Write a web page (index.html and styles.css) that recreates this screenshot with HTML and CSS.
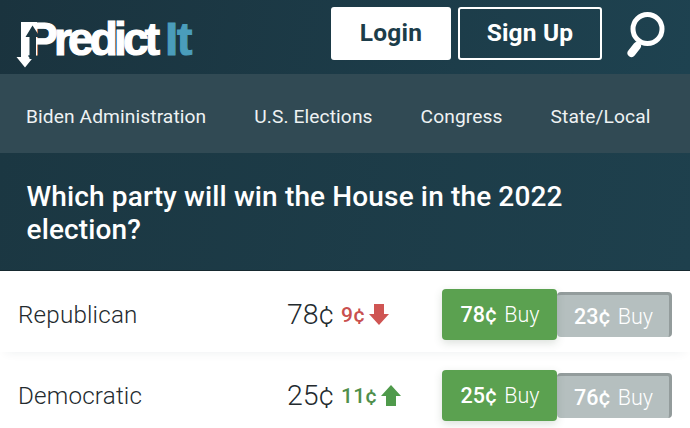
FILE: index.html
```html
<!DOCTYPE html>
<html lang="en">
<head>
<meta charset="utf-8">
<title>PredictIt</title>
<link rel="stylesheet" href="styles.css">
</head>
<body>
<header class="top">
  <a class="logo">
    <span>Predict</span><span class="logo-b">It</span>
    <svg class="logo-arrows" width="30" height="50" viewBox="0 0 30 50">
      <path d="M6 2h16v33H13.500v2h5L10 47.500 1.500 37H6z" fill="#fff"/>
      <path d="M17.500 5.500L25 17h-4v21h-6.500V17h-4z" fill="#1b3641"/>
      <path d="M14.500 37h8v2h-8z" fill="#1b3641"/>
    </svg>
  </a>
  <div class="actions">
    <button class="btn btn-login">Login</button>
    <button class="btn btn-signup">Sign Up</button>
    <svg class="search" width="42" height="48" viewBox="0 0 42 48" fill="none">
      <circle cx="21.500" cy="19" r="14.500" stroke="#fff" stroke-width="5"/>
      <path d="M15 31l-5 6" stroke="#fff" stroke-width="3"/>
      <path d="M11 36l-5.500 7" stroke="#fff" stroke-width="8" stroke-linecap="round"/>
    </svg>
  </div>
</header>
<nav class="nav">
  <a>Biden Administration</a>
  <a>U.S. Elections</a>
  <a>Congress</a>
  <a>State/Local</a>
</nav>
<section class="title">
  <h1>Which party will win the House in the 2022 election?</h1>
</section>
<main>
  <div class="row">
    <div class="name">Republican</div>
    <div class="price">78¢</div>
    <div class="change down">9¢
      <svg class="arrow" width="20" height="21" viewBox="0 0 20 21"><path d="M5 0h10v10h5L10 21 0 10h5z" fill="#cf5553"/></svg>
    </div>
    <div class="buys">
      <button class="buy yes"><b>78¢</b> Buy</button>
      <button class="buy no"><b>23¢</b> Buy</button>
    </div>
  </div>
  <div class="row">
    <div class="name">Democratic</div>
    <div class="price">25¢</div>
    <div class="change up">11¢
      <svg class="arrow" width="20" height="21" viewBox="0 0 20 21"><path d="M5 21h10V11h5L10 0 0 11h5z" fill="#4f9a4b"/></svg>
    </div>
    <div class="buys">
      <button class="buy yes"><b>25¢</b> Buy</button>
      <button class="buy no"><b>76¢</b> Buy</button>
    </div>
  </div>
</main>
</body>
</html>
```
FILE: styles.css
```css
* { box-sizing: border-box; }
html, body { margin: 0; height: 428px; overflow: hidden; }
body { background: #fff; font-family: Roboto, "Liberation Sans", sans-serif; color: #232a2e; }

.top {
  height: 74px;
  display: flex;
  align-items: flex-start;
  justify-content: space-between;
  padding: 7px 22px 0 18px;
  background: linear-gradient(100deg, #1a333e, #1e4250);
}
.logo {
  position: relative;
  display: flex;
  height: 60px;
  padding: 7px 0 0 9px;
  font-family: "Liberation Sans", sans-serif;
  font-weight: 700;
  font-size: 46px;
  line-height: 50px;
  letter-spacing: -3.800px;
  color: #fff;
  -webkit-text-stroke: 1.200px currentColor;
}
.logo-b { color: #4a9dbb; margin-left: 9px; letter-spacing: -1.200px; }
.logo-arrows { position: absolute; left: -3px; top: 13px; }

.actions { display: flex; align-items: flex-start; }
.btn {
  height: 53px;
  border-radius: 3px;
  font-family: Roboto, sans-serif;
  font-size: 24.500px;
  font-weight: 700;
  letter-spacing: .2px;
  padding: 0 0 2px;
}
.btn-login { width: 120px; background: #fff; color: #1c3d4a; border: 0; }
.btn-signup { width: 144px; margin-left: 7px; background: transparent; color: #fff; border: 2px solid #fff; }
.search { margin: 3px 0 0 24px; }

.nav {
  height: 79px;
  display: flex;
  align-items: center;
  gap: 48px;
  padding: 6px 0 0 26px;
  background: #314a54;
  color: #eef2f3;
  font-size: 19.200px;
  letter-spacing: .1px;
}

.title {
  height: 118px;
  padding: 27px 60px 0 26.500px;
  background: linear-gradient(100deg, #1b3742, #1e404d);
  border-bottom: 1px solid #16292f;
}
.title h1 {
  margin: 0;
  color: #fff;
  font-size: 28px;
  line-height: 33px;
  font-weight: 500;
  letter-spacing: .14px;
}

.row {
  height: 81px;
  display: flex;
  align-items: center;
  padding: 6px 18px 0;
  box-shadow: 0 6px 10px -6px rgba(30, 50, 60, .08);
}
.name { width: 269px; font-size: 24.200px; font-weight: 300; letter-spacing: .2px; }
.price { width: 54px; font-size: 28.500px; font-weight: 300; }
.change { display: flex; align-items: center; gap: 4px; width: 102px; font-size: 21px; font-weight: 500; letter-spacing: .2px; }
.down { color: #c9504f; }
.up { color: #4f8f4c; }
.arrow { flex: none; }

.buys { display: flex; align-items: flex-start; margin-left: -1px; }
.buy {
  height: 45px;
  border: 0;
  border-radius: 4px;
  color: #fff;
  font-family: Roboto, sans-serif;
  font-size: 21.500px;
  font-weight: 300;
  padding: 0 0 0 1px;
}
.buy b { font-weight: 500; margin-right: 2px; }
.yes { width: 115px; height: 51px; background: #5ba150; box-shadow: 0 3px 8px rgba(60, 90, 60, .18); position: relative; }
.no { width: 115px; margin-top: 3px; background: #b5bfbf; border-top: 3px solid #939c9c; border-right: 3px solid #939c9c; }
```
